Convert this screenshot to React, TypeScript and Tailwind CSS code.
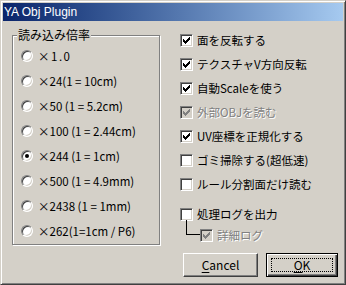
import React from 'react';

const scales = [
    '×1.0',
    '×24(1 = 10cm)',
    '×50 (1 = 5.2cm)',
    '×100 (1 = 2.44cm)',
    '×244 (1 = 1cm)',
    '×500 (1 = 4.9mm)',
    '×2438 (1 = 1mm)',
    '×262(1=1cm / P6)',
];

const options = [
    { label: '面を反転する', checked: true },
    { label: 'テクスチャV方向反転', checked: true },
    { label: '自動Scaleを使う', checked: true },
    { label: '外部OBJを読む', checked: true, disabled: true },
    { label: 'UV座標を正規化する', checked: true },
    { label: 'ゴミ掃除する(超低速)', checked: false },
    { label: 'ルール分割面だけ読む', checked: false },
];

const Radio = ({ checked }: { checked?: boolean }) => (
    <span className="flex items-center justify-center w-[12px] h-[12px] shrink-0 rounded-full bg-white border border-[#808080] border-r-white border-b-white shadow-[inset_1px_1px_0_#404040,inset_-1px_-1px_0_#d4d0c8]">
        {checked && <span className="w-[4px] h-[4px] rounded-full bg-black" />}
    </span>
);

const Check = ({ checked, disabled }: { checked?: boolean; disabled?: boolean }) => (
    <span
        className={`flex items-center justify-center w-[13px] h-[13px] shrink-0 border border-[#808080] border-r-white border-b-white shadow-[inset_1px_1px_0_#404040,inset_-1px_-1px_0_#d4d0c8] ${
            disabled ? 'bg-[#d4d0c8]' : 'bg-white'
        }`}
    >
        {checked && (
            <svg width="7" height="7" viewBox="0 0 7 7" shapeRendering="crispEdges" fill={disabled ? '#808080' : '#000'}>
                {/* classic 7x7 tick, one 3px run per column */}
                {[2, 3, 4, 3, 2, 1, 0].map((y, x) => (
                    <rect key={x} x={x} y={y} width="1" height="3" />
                ))}
            </svg>
        )}
    </span>
);

const Label = ({ text, disabled }: { text: string; disabled?: boolean }) => (
    <span
        className={`whitespace-nowrap leading-[14px] ${
            disabled ? 'text-[#808080] [text-shadow:1px_1px_0_#fff]' : 'text-black'
        }`}
    >
        {text}
    </span>
);

export default function App() {
    return (
        <div
            className="w-[346px] h-[285px] flex flex-col p-[2px] bg-[#d4d0c8] border border-[#d4d0c8] border-r-[#404040] border-b-[#404040] shadow-[inset_1px_1px_0_#fff,inset_-1px_-1px_0_#808080]"
            style={{ fontFamily: '"Noto Sans CJK JP", "Liberation Sans", sans-serif' }}
        >
            {/* title bar */}
            <div className="h-[18px] flex items-center pl-[1px] bg-gradient-to-r from-[#0a246a] to-[#a6caf0]">
                <span className="text-white text-[12px] leading-none" style={{ fontFamily: '"Liberation Sans", sans-serif' }}>
                    YA Obj Plugin
                </span>
            </div>

            <div className="flex items-start pl-[9px]">
                {/* scale group */}
                <div className="relative mt-[14px] w-[148px] h-[210px] pt-[7px] pl-[8px] border border-[#808080] shadow-[inset_1px_1px_0_#fff,1px_1px_0_#fff]">
                    <span className="absolute left-[4px] top-[-8px] px-[1px] bg-[#d4d0c8] text-[12px] leading-[14px] text-black">
                        読み込み倍率
                    </span>
                    {scales.map((s, i) => (
                        <div key={s} className="h-[25px] flex items-center gap-[5px] text-[11.5px]">
                            <Radio checked={i === 4} />
                            <span className={`whitespace-nowrap leading-[14px] ${i === 0 ? 'tracking-[1.5px]' : ''}`}>{s}</span>
                        </div>
                    ))}
                </div>

                {/* option column */}
                <div className="ml-[20px] pt-[7px] flex flex-col text-[11.5px]">
                    {options.map((o) => (
                        <div key={o.label} className="h-[24px] flex items-center gap-[4px]">
                            <Check checked={o.checked} disabled={o.disabled} />
                            <Label text={o.label} disabled={o.disabled} />
                        </div>
                    ))}
                    <div className="mt-[7px] h-[22px] flex items-center gap-[4px]">
                        <Check />
                        <Label text="処理ログを出力" />
                    </div>
                    <div className="h-[20px] flex items-center pl-[6px]">
                        <span className="self-start -mt-[5px] w-[14px] h-[15px] border-l border-b border-black" />
                        <div className="flex items-center gap-[4px]">
                            <Check checked disabled />
                            <Label text="詳細ログ" disabled />
                        </div>
                    </div>

                    <div className="mt-[8px] ml-[3px] flex gap-[8px] text-[12px]">
                        <button className="w-[75px] h-[24px] flex items-center justify-center bg-[#d4d0c8] border border-white border-r-[#404040] border-b-[#404040] shadow-[inset_-1px_-1px_0_#808080]">
                            <span>
                                <span className="underline underline-offset-2">C</span>ancel
                            </span>
                        </button>
                        <button className="relative w-[72px] h-[24px] flex items-center justify-center bg-[#d4d0c8] border border-black shadow-[inset_1px_1px_0_#fff,inset_-1px_-1px_0_#404040,inset_-2px_-2px_0_#808080]">
                            <span className="absolute inset-[4px] border border-dotted border-black" />
                            <span>
                                <span className="underline underline-offset-2">O</span>K
                            </span>
                        </button>
                    </div>
                </div>
            </div>
        </div>
    );
}
